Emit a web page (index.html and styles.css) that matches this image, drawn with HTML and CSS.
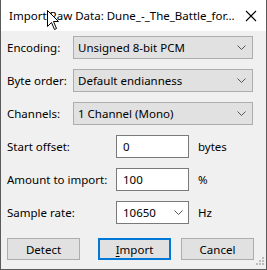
FILE: index.html
```html
<!DOCTYPE html>
<html lang="en">
<head>
    <meta charset="UTF-8">
    <title>Import Raw Data</title>
    <link rel="stylesheet" href="styles.css">
</head>
<body>
    <div class="window">
        <div class="titlebar">
            <span class="title">Import Raw Data: Dune_-_The_Battle_for...</span>
            <svg class="close" width="12" height="12" viewBox="0 0 12 12">
                <path d="M1 1 L11 11 M11 1 L1 11" stroke="#000" stroke-width="1.1" fill="none"/>
            </svg>
        </div>

        <div class="content">
            <div class="row wide">
                <label>Encoding:</label>
                <div class="combo"><span>Unsigned 8-bit PCM</span><svg class="chev" width="9" height="5" viewBox="0 0 9 5"><path d="M0.5 0.5 L4.5 4.5 L8.5 0.5" stroke="#555" fill="none"/></svg></div>
            </div>
            <div class="row wide">
                <label>Byte order:</label>
                <div class="combo"><span>Default endianness</span><svg class="chev" width="9" height="5" viewBox="0 0 9 5"><path d="M0.5 0.5 L4.5 4.5 L8.5 0.5" stroke="#555" fill="none"/></svg></div>
            </div>
            <div class="row wide">
                <label>Channels:</label>
                <div class="combo"><span>1 Channel (Mono)</span><svg class="chev" width="9" height="5" viewBox="0 0 9 5"><path d="M0.5 0.5 L4.5 4.5 L8.5 0.5" stroke="#555" fill="none"/></svg></div>
            </div>
            <div class="row field">
                <label>Start offset:</label>
                <div class="textbox">0</div>
                <span class="unit">bytes</span>
            </div>
            <div class="row field">
                <label>Amount to import:</label>
                <div class="textbox">100</div>
                <span class="unit">%</span>
            </div>
            <div class="row field">
                <label>Sample rate:</label>
                <div class="textbox editcombo"><span>10650</span><svg class="chev" width="9" height="5" viewBox="0 0 9 5"><path d="M0.5 0.5 L4.5 4.5 L8.5 0.5" stroke="#555" fill="none"/></svg></div>
                <span class="unit">Hz</span>
            </div>

            <div class="buttons">
                <button class="btn detect">Detect</button>
                <button class="btn default"><u>I</u>mport</button>
                <button class="btn">Cancel</button>
            </div>
        </div>

        <svg class="grip" width="10" height="10" viewBox="0 0 10 10">
            <rect x="8" y="0" width="2" height="2" fill="#bcbcbc"/>
            <rect x="5" y="3" width="2" height="2" fill="#bcbcbc"/>
            <rect x="8" y="3" width="2" height="2" fill="#bcbcbc"/>
            <rect x="2" y="6" width="2" height="2" fill="#bcbcbc"/>
            <rect x="5" y="6" width="2" height="2" fill="#bcbcbc"/>
            <rect x="8" y="6" width="2" height="2" fill="#bcbcbc"/>
        </svg>

        <svg class="cursor" width="13" height="21" viewBox="0 0 13 21">
            <path d="M0.5 0.5 L0.5 16.5 L4.5 12.5 L7.5 19.5 L9.5 18.5 L6.5 11.5 L11.5 11.5 Z" fill="#fff" stroke="#000" stroke-linejoin="miter"/>
        </svg>
    </div>
</body>
</html>
```

FILE: styles.css
```css
body { margin: 0; font-family: 'Segoe UI', 'Noto Sans', sans-serif; font-size: 11.5px; color: #000; background: #f0f0f0; }
.window { position: relative; width: 267px; height: 270px; box-sizing: border-box; background: #f0f0f0; border: 1px solid #5a5a5a; border-top: none; }
.titlebar { height: 31px; background: #fff; display: flex; align-items: center; padding-left: 8px; }
.title { font-size: 11.5px; white-space: nowrap; flex: 1; padding-bottom: 1px; }
.close { margin-right: 9px; margin-left: 6px; }

.content { display: flex; flex-direction: column; gap: 10px; padding: 5px 0 0 6px; }
.row { display: grid; height: 23px; align-items: center; }
.row.wide { grid-template-columns: 66px 180px; }
.row.field { grid-template-columns: 109px 73px auto; }
label { white-space: nowrap; }

.combo { height: 23px; box-sizing: border-box; background: #e1e1e1; border: 1px solid #adadad; display: flex; align-items: center; justify-content: space-between; padding: 0 6px 0 4px; }
.chev { flex: none; }
.textbox { height: 23px; box-sizing: border-box; background: #fff; border: 1px solid #7a7a7a; display: flex; align-items: center; padding: 0 6px; }
.editcombo { justify-content: space-between; padding-right: 5px; }
.unit { white-space: nowrap; margin-left: 9px; }

.buttons { display: flex; margin-top: 4px; }
.btn { font: inherit; height: 22px; width: 73px; box-sizing: border-box; background: #e1e1e1; border: 1px solid #adadad; padding: 0; color: #000; }
.btn.detect { margin-right: 18px; }
.btn.default { border: 2px solid #0078d7; margin-right: 10px; }
.btn u { text-decoration-thickness: 1px; text-underline-offset: 2px; }

.grip { position: absolute; right: 2px; bottom: 2px; }
.cursor { position: absolute; left: 46px; top: 10px; }
```
